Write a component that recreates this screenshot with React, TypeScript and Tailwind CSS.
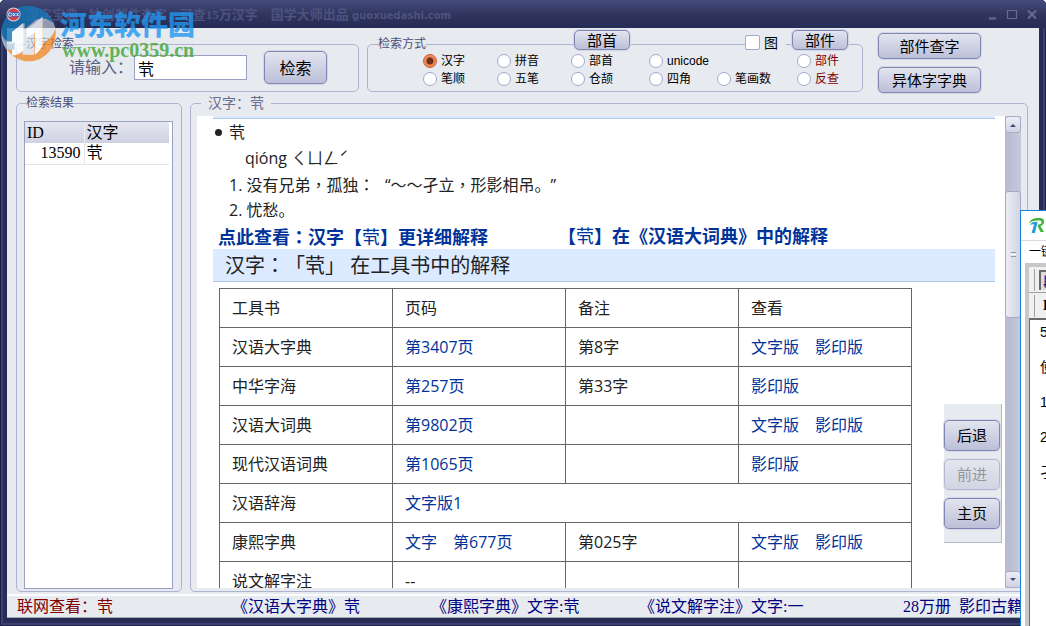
import React from 'react';

const SANS = "font-['Open_Sans','Noto_Sans_CJK_SC',sans-serif]";
const SONG = "font-['Liberation_Serif','Noto_Sans_CJK_SC',serif]";

const BTN =
  'rounded-[5px] border border-[#8286b2] bg-linear-to-b from-[#e2e4ef] via-[#cfd2e4] to-[#bcc0d8] text-black shadow-[0_0_0_1px_#d3d6e5] text-center leading-none disabled:opacity-50 disabled:text-[#444]';
const GROUP = 'min-w-0 rounded-[5px] border border-[#b0b3d0]';
const LEGEND = 'h-[14px] text-[12px] leading-[14px] text-[#4a4f78]';

function Punct({ children }: { children: string }) {
  return <span className="font-['Noto_Sans_CJK_TC',sans-serif]">{children}</span>;
}

function Mode({ label, name, className = '', on }: { label: string; name: string; className?: string; on?: boolean }) {
  return (
    <label className={'flex h-[18px] items-center gap-1 text-[12px] leading-none ' + className}>
      <input
        type="radio"
        name={name}
        defaultChecked={on}
        className="size-[14px] shrink-0 appearance-none rounded-full border border-[#a3a8d0] bg-white checked:border-[#d0582c] checked:bg-[radial-gradient(circle,#6e3018_0_3px,#ee8253_4px,#f08a5c_6px)]"
      />
      <span>{label}</span>
    </label>
  );
}

type Row = { book: string; page: string[]; note?: string; view?: string[]; wide?: boolean };

const ROWS: Row[] = [
  { book: '汉语大字典', page: ['第3407页'], note: '第8字', view: ['文字版', '影印版'] },
  { book: '中华字海', page: ['第257页'], note: '第33字', view: ['影印版'] },
  { book: '汉语大词典', page: ['第9802页'], view: ['文字版', '影印版'] },
  { book: '现代汉语词典', page: ['第1065页'], view: ['影印版'] },
  { book: '汉语辞海', page: ['文字版1'], wide: true },
  { book: '康熙字典', page: ['文字', '第677页'], note: '第025字', view: ['文字版', '影印版'] },
  { book: '说文解字注', page: [] },
];

function Links({ items }: { items: string[] }) {
  return (
    <span className="flex gap-4 text-[#003399]">
      {items.map((t) => (
        <a href="#" key={t}>
          {t}
        </a>
      ))}
    </span>
  );
}

const CELL = 'h-[39px] border border-[#666] px-3 py-0 text-left font-normal';

function TitleBar() {
  return (
    <header className="flex h-7 shrink-0 items-center justify-between rounded-t-[5px] bg-linear-to-b from-[#454b7a] via-[#31365f] to-[#262b55] px-2">
      <div className="flex items-center gap-1 pl-px">
        <svg viewBox="0 0 16 16" className="relative z-10 -ml-[3px] mr-px size-[15px]" aria-hidden="true">
          <circle cx="8" cy="8" r="7.5" fill="#d9d4e0" />
          <circle cx="8" cy="8" r="6.4" fill="#d2404f" />
          <path d="M1.6 5.4h12.8v5H1.6z" fill="#2c5fae" />
          <path d="M3 6.300h1.600q2 0 2 1.700t-2 1.700H3zM7.600 6.300l2.400 3.400M10 6.300 7.600 9.700M11.200 6.300l2.200 3.400M13.400 6.300l-2.200 3.400" stroke="#fff" strokeWidth=".9" fill="none" />
        </svg>
        <h1 className="whitespace-pre text-[13px] font-bold leading-none text-[#4d527f]">
          <span className={SONG}>{'汉字宝典 - 独创部件查字，可查15万汉字　国学大师出品 '}</span>
          <span className="font-['DejaVu_Sans',sans-serif] text-[10px]">guoxuedashi.com</span>
        </h1>
      </div>
      <div className="flex items-center gap-2 text-[#666b94]">
        <button aria-label="Minimize" className="size-3">
          <svg viewBox="0 0 12 12"><path d="M3 10.500h7" stroke="currentColor" strokeWidth="2" /></svg>
        </button>
        <button aria-label="Maximize" className="size-3">
          <svg viewBox="0 0 12 12"><path d="M1.500 2.500h9v8h-9zM1 2.500h10" stroke="currentColor" strokeWidth="1.2" fill="none" /></svg>
        </button>
        <button aria-label="Close" className="size-3">
          <svg viewBox="0 0 12 12"><path d="m2 2.500 8 8m0-8-8 8" stroke="currentColor" strokeWidth="2" /></svg>
        </button>
      </div>
    </header>
  );
}

function Toolbar() {
  return (
    <div className="flex shrink-0 gap-2 pl-[9px] pr-[58px] pt-[9px]">
      <fieldset className={GROUP + ' h-[55px] w-[343px] shrink-0'}>
        <legend className={LEGEND + ' ml-[9px]'}>汉字检索</legend>
        <div className="flex pl-[52px]">
          <label htmlFor="query" className="w-[65px] pt-2 text-[16px] leading-none text-[#5a5f83]">
            请输入：
          </label>
          <input
            id="query"
            defaultValue="茕"
            className="mt-1 h-[25px] w-[113px] border border-[#9a9fc4] bg-white px-[3px] text-[16px] leading-none text-black"
          />
          <button className={BTN + ' ml-[17px] h-[33px] w-[63px] text-[16px]'}>检索</button>
        </div>
      </fieldset>

      <div className="relative min-w-0 flex-1">
        <fieldset className={GROUP + ' h-[55px]'}>
          <legend className={LEGEND + ' ml-[10px]'}>检索方式</legend>
          <div className="grid grid-cols-[74px_74px_78px_68px_80px_auto] pl-[55px] pt-px text-black">
            <Mode name="mode" label="汉字" on />
            <Mode name="mode" label="拼音" />
            <Mode name="mode" label="部首" />
            <Mode name="mode" label="unicode" className="col-span-2 font-['Liberation_Sans',sans-serif]" />
            <Mode name="mode" label="部件" className="text-[#800000]" />
            <Mode name="mode" label="笔顺" />
            <Mode name="mode" label="五笔" />
            <Mode name="mode" label="仓颉" />
            <Mode name="mode" label="四角" />
            <Mode name="mode" label="笔画数" />
            <Mode name="mode" label="反查" className="text-[#800000]" />
          </div>
        </fieldset>
        <div className="absolute inset-x-0 -top-[7px] flex items-start justify-end pr-[15px]">
          <button className={BTN + ' mr-[115px] h-5 w-14 text-[15px]'}>部首</button>
          <label className="mr-[6px] flex h-6 items-center gap-1 bg-[#e7eaef] pr-2 text-[14px] text-black">
            <input type="checkbox" className="size-[15px] appearance-none rounded-[2px] border border-[#a3a8d0] bg-white" />
            图
          </label>
          <button className={BTN + ' h-5 w-14 text-[15px]'}>部件</button>
        </div>
      </div>

      <div className="-mt-1 ml-[7px] flex w-[103px] shrink-0 flex-col gap-2">
        <button className={BTN + ' h-[26px] text-[15px]'}>部件查字</button>
        <button className={BTN + ' h-[26px] text-[15px]'}>异体字字典</button>
      </div>
    </div>
  );
}

function Results() {
  return (
    <fieldset className={GROUP + ' flex w-[166px] shrink-0 flex-col px-[7px] pb-[2px] pt-[11px]'}>
      <legend className={LEGEND + ' ml-[2px]'}>检索结果</legend>
      <div className="min-h-0 w-[149px] flex-1 border border-[#9a9fc4] bg-white">
        <table className={SONG + ' w-36 table-fixed border-collapse text-[16px] leading-none text-black'}>
          <thead>
            <tr className="h-[21px] bg-linear-to-b from-[#e4e6f0] to-[#cfd2e3]">
              <th className="w-[59px] border-r border-[#eceef4] px-[2px] text-left font-normal">ID</th>
              <th className="px-[2px] text-left font-normal">汉字</th>
            </tr>
          </thead>
          <tbody>
            <tr className="h-[21px] border-b border-[#e4e6ec]">
              <td className="border-r border-[#e4e6ec] px-[3px] text-right">13590</td>
              <td className="px-[2px]">茕</td>
            </tr>
          </tbody>
        </table>
      </div>
    </fieldset>
  );
}

function Article() {
  return (
    <article className={SANS + ' min-w-0 flex-1 overflow-hidden bg-white pl-4 pr-[10px] text-[16px] text-[#222]'}>
      <div className="h-[3px] border-b border-[#b0c9ea] bg-[#dceaff]" />
      <div className="leading-[26px]">
        <p className="flex h-[26px] items-center gap-[7px] pl-[2px]">
          <span className="size-[7px] rounded-full bg-[#222]" />茕
        </p>
        <p className="h-[26px] pl-8">qióng ㄑㄩㄥˊ</p>
        <ol className="pl-4">
          <li className="h-[26px]">
            1. 没有兄弟<Punct>，</Punct>孤独<Punct>：</Punct>
            <span className="inline-block w-4 text-right">“</span>
            ～～孑立<Punct>，</Punct>形影相吊。”
          </li>
          <li className="h-[26px]">2. 忧愁。</li>
        </ol>
        <p className="flex h-[26px] gap-[70px] whitespace-nowrap pl-[5px] text-[18px] font-bold text-[#003399]">
          <a href="#">
            点此查看<Punct>：</Punct>汉字【<span className="font-normal">茕</span>】更详细解释
          </a>
          <a href="#">
            【<span className="font-normal">茕</span>】在《汉语大词典》中的解释
          </a>
        </p>
      </div>
      <h2 className="h-[33px] border-b border-[#b0c9ea] bg-[#dceaff] pl-3 text-[20px] font-normal leading-8">
        汉字<Punct>：</Punct>「茕」 在工具书中的解释
      </h2>
      <table className="ml-[6px] mt-[6px] w-[693px] table-fixed border-collapse leading-6">
        <thead>
          <tr>
            {['工具书', '页码', '备注', '查看'].map((h) => (
              <th key={h} className={CELL}>{h}</th>
            ))}
          </tr>
        </thead>
        <tbody>
          {ROWS.map((r) => (
            <tr key={r.book}>
              <td className={CELL}>{r.book}</td>
              <td className={CELL} colSpan={r.wide ? 3 : 1}>
                {r.page.length ? <Links items={r.page} /> : '--'}
              </td>
              {!r.wide && <td className={CELL}>{r.note}</td>}
              {!r.wide && <td className={CELL}>{r.view && <Links items={r.view} />}</td>}
            </tr>
          ))}
        </tbody>
      </table>
    </article>
  );
}

function ScrollBar() {
  const cap = 'flex h-[17px] shrink-0 items-center justify-center rounded-[3px] border border-[#a9adc8] bg-linear-to-b from-[#eceef5] to-[#d0d3e4]';
  return (
    <div className="flex w-4 shrink-0 flex-col bg-linear-to-r from-[#b7bad0] to-[#c6c9dc]">
      <button aria-label="Scroll up" className={cap}>
        <svg viewBox="0 0 8 4" className="h-1 w-2"><path d="M1 4l3-3 3 3z" fill="#3f4474" /></svg>
      </button>
      <div className="h-[58px] shrink-0" />
      <div className="flex h-[127px] flex-col items-center justify-center gap-px rounded-[3px] border border-[#a4a8c6] bg-linear-to-r from-[#ebecf4] to-[#d2d4e4]">
        <span className="h-px w-[5px] bg-[#8f93b5]" />
        <span className="h-px w-[5px] bg-white" />
        <span className="h-px w-[5px] bg-[#8f93b5]" />
      </div>
      <div className="flex-1" />
      <button aria-label="Scroll down" className={cap}>
        <svg viewBox="0 0 8 4" className="h-1 w-2"><path d="M1 0l3 3 3-3z" fill="#3f4474" /></svg>
      </button>
    </div>
  );
}

function Viewer() {
  return (
    <fieldset className={GROUP + ' flex flex-1 flex-col pb-[3px] pl-[6px] pr-[6px] pt-[6px]'}>
      <legend className="ml-1 h-[14px] px-[7px] text-[14px] leading-[14px] text-[#6a6e8e]">汉字：茕</legend>
      <div className="relative flex min-h-0 flex-1">
        <Article />
        <ScrollBar />
        <nav className="absolute bottom-[45px] right-[19px] flex flex-col gap-2 border-b border-r border-[#b3bcc6] bg-[#e7eaef] pb-[13px] pr-px pt-4">
          <button className={BTN + ' h-[31px] w-14 text-[15px]'}>后退</button>
          <button disabled className={BTN + ' h-[31px] w-14 text-[15px]'}>前进</button>
          <button className={BTN + ' h-[31px] w-14 text-[15px]'}>主页</button>
        </nav>
      </div>
    </fieldset>
  );
}

function StatusBar() {
  return (
    <footer className={SONG + ' mt-[2px] grid h-6 shrink-0 grid-cols-[215px_199px_208px_264px_auto] items-center whitespace-pre border-b border-t-2 border-b-[#9fb0b6] border-t-[#fbfcfd] pl-[10px] text-[16px] leading-none text-[#000080]'}>
      <span className="text-[#800000]">联网查看：茕</span>
      <a href="#">《汉语大字典》茕</a>
      <a href="#">《康熙字典》文字:茕</a>
      <a href="#">《说文解字注》文字:一</a>
      <a href="#">{'28万册  影印古籍'}</a>
    </footer>
  );
}

function Watermark() {
  return (
    <div className="pointer-events-none absolute left-0 top-1 flex gap-1 opacity-80">
      <svg viewBox="0 0 168 180" className="h-[60px] w-14" aria-hidden="true">
        <circle cx="86" cy="90" r="82" fill="#d9e4ec" opacity=".75" />
        <path d="M4 84C8 34 46 4 88 6c34 2 60 22 72 50-20-14-42-18-58-4L74 76V58L36 84v28C20 116 8 104 4 84z" fill="#1779b8" />
        <path d="M20 134c24 2 38-6 48-18v36h34V84l26-24v58c22-10 34-28 38-46 8 56-32 100-78 100-28 0-54-14-68-38z" fill="#f08c2c" />
        <path d="M36 84l34-28v84q-16 14-34 14zM80 76l48-38v86q-10 20-24 28V86l-24 16z" fill="#fff" />
        <path d="M4 90c2 22 14 32 32 30l8-6v22c-12 4-22 0-28-8-6-10-12-22-12-38z" fill="#b9d3e4" />
      </svg>
      <div className="whitespace-nowrap pt-[6px]">
        <p className="font-['Noto_Sans_CJK_SC',sans-serif] text-[27px] font-black leading-7 text-[#2196ee]">河东软件园</p>
        <p className="pl-[2px] font-['Liberation_Serif',serif] text-[20px] font-bold leading-6 text-[#3fa535]">www.pc0359.cn</p>
      </div>
    </div>
  );
}

function SideWindow() {
  return (
    <aside className="absolute bottom-0 right-0 top-[210px] flex w-[26px] flex-col overflow-hidden whitespace-nowrap border-l border-t border-[#1883d7] bg-white text-black">
      <div className="flex h-[30px] shrink-0 items-center border-b border-[#dcdcdc] pl-[7px]">
        <svg viewBox="0 0 17 17" className="size-[17px] shrink-0" aria-hidden="true">
          <path d="M1 7C2 2 7 .8 11 1c4 0 5.600 2 5 4.600-.4 1.800-1.800 3-3.600 3.600L16 15h-3.500L9.600 9l.8-1.600c2 0 3-.8 3.200-2 .2-1.400-.8-2-2.800-2C6 3.300 3 4 1 7z" fill="#3eb53a" />
          <path d="M4 5.500c2-1 4-1 5.600-.6L7 16H3.600L6 7.500c-1-.4-2.200-.2-4 .4z" fill="#2a9fd8" />
        </svg>
      </div>
      <div className="h-[22px] shrink-0 pl-2 text-[12px] leading-[22px]">一键</div>
      <div className="ml-1 flex min-h-0 flex-1 flex-col border-l-4 border-t-4 border-[#c8c8c8]">
        <div className="flex h-[26px] shrink-0 items-center gap-1 border-b border-[#a0a0a0] bg-[#f0f0f0] pl-[5px]">
          <span className="h-[22px] w-px shrink-0 bg-[#a0a0a0]" />
          <button className="h-5 shrink-0 border-l-2 border-t-2 border-[#6a6a6a] bg-[#dcdcdc] pl-[2px] text-[14px] leading-none text-[#000080]">段</button>
        </div>
        <div className="flex h-[25px] shrink-0 items-center gap-2 bg-[#f0f0f0] pl-[5px]">
          <span className="h-[22px] w-px shrink-0 bg-[#a0a0a0]" />
          <b className="font-['Liberation_Serif',serif] text-[14px]">B</b>
        </div>
        <div className="flex-1 border-l border-t-2 border-[#6a6a6a] pl-[10px] font-['Liberation_Sans','Noto_Sans_CJK_SC',sans-serif] text-[14px] leading-[35px]">
          <div className="-mt-[5px]">5</div>
          <div>使</div>
          <div>1</div>
          <div>2</div>
          <div>孑</div>
        </div>
      </div>
    </aside>
  );
}

export default function App() {
  return (
    <div className={SANS + ' relative flex h-screen flex-col overflow-hidden rounded-t-[5px] bg-[#282d57] shadow-[inset_0_0_0_1px_#1d2147,inset_0_0_0_3px_#3b4173] [text-spacing-trim:space-all]'}>
      <TitleBar />
      <div className="mx-[7px] mb-2 flex min-h-0 flex-1 flex-col bg-[#e7eaef]">
        <Toolbar />
        <main className="mt-[3px] flex min-h-0 flex-1 gap-2 pl-[9px] pr-[11px]">
          <Results />
          <Viewer />
        </main>
        <StatusBar />
      </div>
      <Watermark />
      <SideWindow />
    </div>
  );
}
